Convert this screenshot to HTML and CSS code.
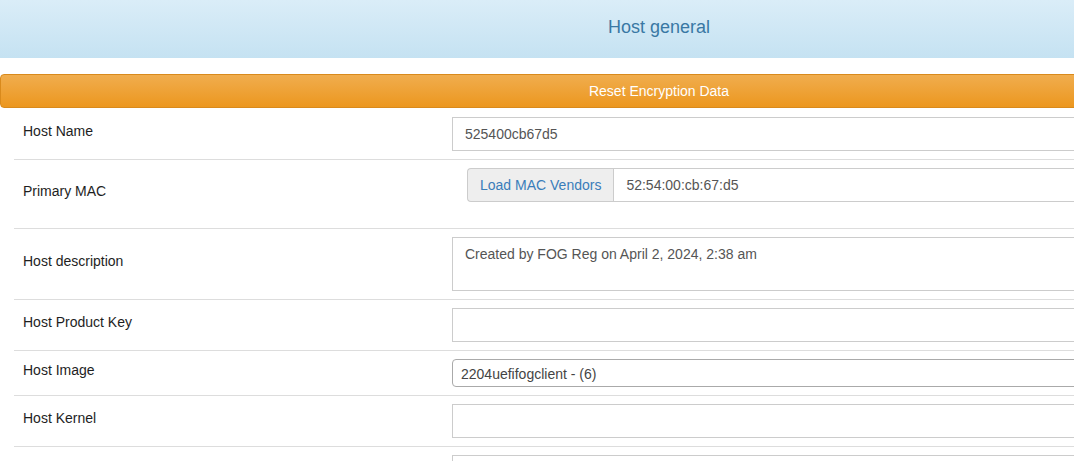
FILE: index.html
```html
<!DOCTYPE html>
<html>
<head>
<meta charset="utf-8">
<title>Host general</title>
<link rel="stylesheet" href="styles.css">
</head>
<body>
<div class="page">
  <div class="panel-heading">Host general</div>
  <button class="btn-reset" type="button">Reset Encryption Data</button>
  <div class="form-table">
    <div class="row row-first">
      <div class="label">Host Name</div>
      <div class="value"><input class="field" type="text" value="525400cb67d5"></div>
    </div>
    <div class="row row-mac">
      <div class="label">Primary MAC</div>
      <div class="value">
        <div class="input-group">
          <span class="addon">Load MAC Vendors</span>
          <input class="field group-field" type="text" value="52:54:00:cb:67:d5">
        </div>
        <div class="vendor"></div>
      </div>
    </div>
    <div class="row">
      <div class="label">Host description</div>
      <div class="value"><textarea class="field area">Created by FOG Reg on April 2, 2024, 2:38 am</textarea></div>
    </div>
    <div class="row">
      <div class="label">Host Product Key</div>
      <div class="value"><input class="field" type="text" value=""></div>
    </div>
    <div class="row">
      <div class="label">Host Image</div>
      <div class="value"><div class="select">2204uefifogclient - (6)</div></div>
    </div>
    <div class="row">
      <div class="label">Host Kernel</div>
      <div class="value"><input class="field" type="text" value=""></div>
    </div>
    <div class="row">
      <div class="label"></div>
      <div class="value"><input class="field" type="text" value=""></div>
    </div>
  </div>
</div>
</body>
</html>
```
FILE: styles.css
```css
html, body {
  margin: 0;
  padding: 0;
  overflow: hidden;
  background: #fff;
}
body {
  font-family: "Liberation Sans", Arial, sans-serif;
  font-size: 14px;
  color: #333;
  width: 1074px;
  height: 461px;
}
.page {
  width: 1318px;
}
.panel-heading {
  height: 58px;
  box-sizing: border-box;
  background: linear-gradient(to bottom, #daedf8 0%, #c5e2f2 100%);
  color: #3978a4;
  font-size: 18px;
  line-height: 20px;
  text-align: center;
  padding-top: 17px;
}
.btn-reset {
  display: block;
  margin: 16px 0 0 0;
  width: 1318px;
  height: 34px;
  box-sizing: border-box;
  border: 1px solid #d98a1c;
  border-radius: 4px;
  background: linear-gradient(to bottom, #f0ad4e 0%, #ec971f 100%);
  color: #fff;
  font-family: "Liberation Sans", Arial, sans-serif;
  font-size: 14px;
  line-height: 20px;
  padding: 6px 0 6px;
  text-align: center;
}
.form-table {
  margin-left: 14px;
}
.row {
  display: flex;
  border-top: 1px solid #ddd;
  padding: 8px 0;
}
.row-first {
  border-top: 1px solid transparent;
}
.label {
  width: 438px;
  flex: none;
  box-sizing: border-box;
  padding: 0 0 6px 9px;
  align-self: center;
  line-height: 20px;
  color: #1e1e1e;
}
.value {
  flex: 1;
}
.field {
  display: block;
  width: 1000px;
  height: 34px;
  box-sizing: border-box;
  border: 1px solid #ccc;
  border-radius: 0;
  padding: 6px 12px;
  font-family: "Liberation Sans", Arial, sans-serif;
  font-size: 14px;
  line-height: 20px;
  color: #555;
  background: #fff;
  outline: none;
  margin: 0;
}
.area {
  height: 54px;
  resize: none;
  overflow: hidden;
}
.input-group {
  display: flex;
  margin-left: 15px;
}
.addon {
  flex: none;
  height: 34px;
  box-sizing: border-box;
  border: 1px solid #ccc;
  border-right: 0;
  border-radius: 4px 0 0 4px;
  background: #eee;
  color: #3a7dba;
  padding: 6px 12px;
  line-height: 20px;
}
.group-field {
  width: 900px;
}
.vendor {
  height: 18px;
}
.select {
  width: 1000px;
  height: 28px;
  box-sizing: border-box;
  border: 1px solid #aaa;
  border-radius: 4px;
  padding: 4px 8px 2px;
  line-height: 20px;
  color: #444;
  background: #fff;
}
```
